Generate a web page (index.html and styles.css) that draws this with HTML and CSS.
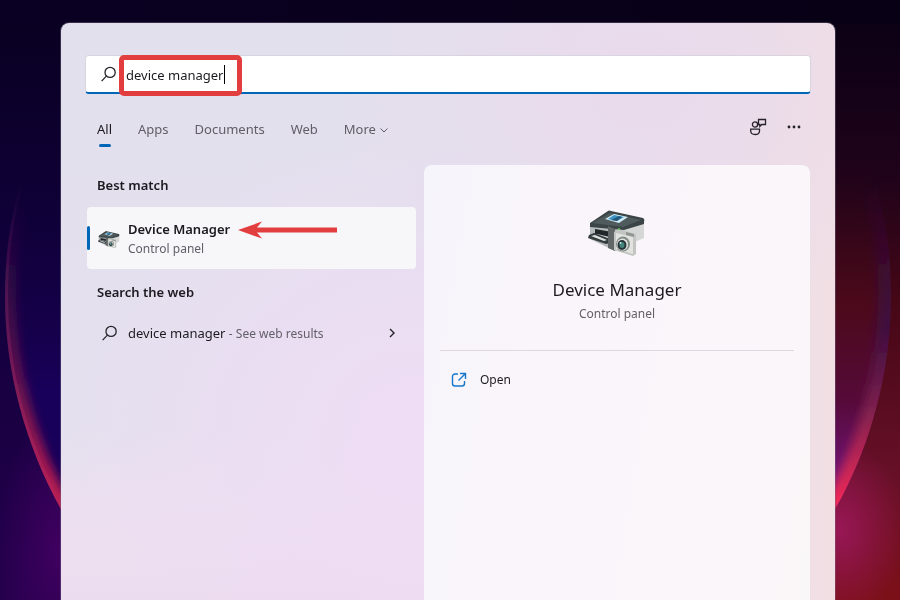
FILE: index.html
```html
<!DOCTYPE html>
<html lang="en">
<head>
<meta charset="utf-8">
<meta name="viewport" content="width=device-width, initial-scale=1">
<title>Search</title>
<link rel="stylesheet" href="styles.css">
</head>
<body>
<svg class="wallpaper" viewBox="0 0 900 600" preserveAspectRatio="none" aria-hidden="true">
  <defs>
    <linearGradient id="base" x1="0" y1="0" x2="0" y2="1"><stop offset="0" stop-color="#09001f"/><stop offset=".4" stop-color="#10003a"/><stop offset="1" stop-color="#24004c"/></linearGradient>
    <linearGradient id="warm" x1="0" y1="0" x2="0" y2="1"><stop offset="0" stop-color="#080014"/><stop offset=".3" stop-color="#20031a"/><stop offset=".5" stop-color="#450716"/><stop offset=".8" stop-color="#681028"/><stop offset="1" stop-color="#7c1018"/></linearGradient>
    <linearGradient id="top" x1="0" y1="0" x2="1" y2="0"><stop offset="0" stop-color="#0a0023"/><stop offset="1" stop-color="#080014"/></linearGradient>
    <linearGradient id="coolRim" gradientUnits="userSpaceOnUse" x1="0" y1="200" x2="0" y2="510"><stop offset="0" stop-color="#4b1048" stop-opacity="0"/><stop offset=".45" stop-color="#641348" stop-opacity=".7"/><stop offset="1" stop-color="#c81c50"/></linearGradient>
    <linearGradient id="coolEdge" gradientUnits="userSpaceOnUse" x1="0" y1="180" x2="0" y2="510"><stop offset="0" stop-color="#7e3070" stop-opacity="0"/><stop offset=".5" stop-color="#7e2060" stop-opacity=".5"/><stop offset="1" stop-color="#b82055"/></linearGradient>
    <linearGradient id="hotRim" gradientUnits="userSpaceOnUse" x1="0" y1="180" x2="0" y2="510"><stop offset="0" stop-color="#301048" stop-opacity="0"/><stop offset=".45" stop-color="#3c0e46" stop-opacity=".8"/><stop offset=".7" stop-color="#80204e"/><stop offset="1" stop-color="#f82a58"/></linearGradient>
    <linearGradient id="inLeft" x1="0" y1="0" x2="0" y2="1"><stop offset=".1" stop-color="#0c002b" stop-opacity="0"/><stop offset=".7" stop-color="#18005a"/></linearGradient>
    <linearGradient id="inRight" x1="0" y1="0" x2="0" y2="1"><stop offset=".15" stop-color="#200418" stop-opacity="0"/><stop offset=".5" stop-color="#4c0a1b"/><stop offset=".72" stop-color="#550a38"/><stop offset=".9" stop-color="#701478"/></linearGradient>
    <radialGradient id="glowL"><stop offset="0" stop-color="#400060"/><stop offset="1" stop-color="#400060" stop-opacity="0"/></radialGradient>
    <radialGradient id="glowR"><stop offset="0" stop-color="#981756"/><stop offset="1" stop-color="#981756" stop-opacity="0"/></radialGradient>
    <filter id="soft" x="-50%" y="-20%" width="200%" height="140%"><feGaussianBlur stdDeviation="5"/></filter>
    <clipPath id="discL"><path d="M62 90C20 160 5 225 5 297C5 370 25 445 62 511L70 520V90z"/></clipPath>
    <clipPath id="discR"><path d="M834 90C876 160 891 225 891 297C891 370 871 447 834 511L826 520V90z"/></clipPath>
  </defs>
  <rect width="450" height="600" fill="url(#base)"/>
  <rect x="450" width="450" height="600" fill="url(#warm)"/>
  <rect width="900" height="24" fill="url(#top)"/>
  <ellipse cx="60" cy="550" rx="65" ry="140" fill="url(#glowL)"/>
  <ellipse cx="840" cy="530" rx="65" ry="90" fill="url(#glowR)"/>
  <g clip-path="url(#discL)">
    <rect y="90" width="80" height="430" fill="url(#inLeft)"/>
    <path d="M62 90C20 160 5 225 5 297C5 370 25 445 62 511" fill="none" stroke="url(#coolRim)" stroke-width="22" filter="url(#soft)"/>
    <path d="M62 90C20 160 5 225 5 297C5 370 25 445 62 511" fill="none" stroke="url(#coolEdge)" stroke-width="6"/>
  </g>
  <g clip-path="url(#discR)">
    <rect x="820" y="90" width="80" height="430" fill="url(#inRight)"/>
    <path d="M834 90C876 160 891 225 891 297C891 370 871 447 834 511" fill="none" stroke="url(#hotRim)" stroke-width="26" filter="url(#soft)"/>
  </g>
</svg>

<main class="panel">
  <form class="search">
    <svg class="icon-search" viewBox="0 0 16 16" aria-hidden="true"><circle cx="9.5" cy="6" r="4.8"/><path d="M6 9.5L1.5 14.2"/></svg>
    <input type="text" aria-label="Search" value="device manager">
    <span class="caret"></span>
    <span class="highlight"></span>
  </form>

  <div class="toolbar">
    <nav class="tabs">
      <button class="tab active" type="button">All</button>
      <button class="tab" type="button">Apps</button>
      <button class="tab" type="button">Documents</button>
      <button class="tab" type="button">Web</button>
      <button class="tab" type="button">More <svg class="chevron-down" viewBox="0 0 8 8" aria-hidden="true"><path d="M.5 2.5L4 6l3.500-3.500"/></svg></button>
    </nav>
    <div class="actions">
      <button type="button" aria-label="Feedback"><svg class="icon-feedback" viewBox="0 0 18 18" aria-hidden="true"><circle cx="6" cy="6.500" r="2.600"/><path d="M1.700 11.200h8.800v1.800c0 2-1.600 3.500-4.400 3.500s-4.400-1.500-4.400-3.500zM9.500 1.500h7v5h-3.700l-2 2v-2H9.500z"/></svg></button>
      <button type="button" aria-label="Options"><svg class="icon-dots" viewBox="0 0 14 4" aria-hidden="true"><circle cx="2" cy="2" r="1.400"/><circle cx="7" cy="2" r="1.400"/><circle cx="12" cy="2" r="1.400"/></svg></button>
    </div>
  </div>

  <div class="content">
    <section class="results">
      <h2>Best match</h2>
      <a class="best" href="#device-manager">
        <svg class="device-small" viewBox="0 0 58 48" aria-hidden="true"><use href="#device"/></svg>
        <span class="labels"><strong>Device Manager</strong><small>Control panel</small></span>
        <svg class="arrow" viewBox="0 0 99 18" aria-hidden="true"><path d="M0 9L24 0.500L19 6.500H99V11.500H19L24 17.500z"/></svg>
      </a>
      <h2>Search the web</h2>
      <a class="web" href="#web">
        <svg class="icon-search" viewBox="0 0 16 16" aria-hidden="true"><circle cx="9.500" cy="6" r="4.800"/><path d="M6 9.500L1.500 14.200"/></svg>
        <span class="query">device manager <small>- See web results</small></span>
        <svg class="chevron-right" viewBox="0 0 8 10" aria-hidden="true"><path d="M2 1l4 4-4 4"/></svg>
      </a>
    </section>

    <section class="detail" id="device-manager">
      <svg class="device-large" viewBox="0 0 58 48" aria-hidden="true">
        <g id="device">
          <path d="M2 16L35 18V36L27 41L2 29z" fill="#b5b9b9"/>
          <path d="M35 18L56 12V28L35 37z" fill="#d5d7d6"/>
          <path d="M2 13L20 1Q21 0 23 1L55 8Q57 9 56 12V14L36 20L2 17z" fill="#3b4446"/>
          <path d="M4 13L22 3L53 10L35 17z" fill="#505b5d"/>
          <path d="M17 9L26 4L40 7L31 13z" fill="#d1ecf6"/>
          <path d="M20 9L26 5L36 7L29 11z" fill="#3d94c7"/>
          <path d="M23 10L31 6L34 7L29 11z" fill="#255778"/>
          <path d="M7 19L24 22V29L7 25z" fill="#202629"/>
          <path d="M9 24L22 27V31L6 27z" fill="#c7cccc"/>
          <path d="M1 25L6 23L22 29V33L18 34L0 28z" fill="#343b3d"/>
          <path d="M3 26L7 25L19 30L16 31z" fill="#dce0df"/>
          <path d="M20 16L27 19V41L20 38z" fill="#616767"/>
          <path d="M26 22L30 19L48 24V44L45 46L26 40z" fill="#c2c5c2"/>
          <path d="M28 23L45 27V44L28 39z" fill="#e2e3df"/>
          <path d="M38 22L46 24V27L38 25z" fill="#8f9693"/>
          <ellipse cx="35" cy="34" rx="7" ry="7.500" fill="#858d8b"/>
          <ellipse cx="34.500" cy="34.500" rx="5.500" ry="6" fill="#e2e5e0"/>
          <ellipse cx="34" cy="35" rx="4.500" ry="5" fill="#293338"/>
          <ellipse cx="34" cy="35" rx="2.500" ry="3" fill="#43837c"/>
          <circle cx="32.500" cy="33" r="1" fill="#b8eee1"/>
          <circle cx="31" cy="19" r="1" fill="#54c755"/>
        </g>
      </svg>
      <h1>Device Manager</h1>
      <p>Control panel</p>
      <hr>
      <a class="open" href="#open">
        <svg class="icon-open" viewBox="0 0 16 16" aria-hidden="true"><path d="M7 2H4a2.500 2.500 0 0 0-2.500 2.500v7A2.500 2.500 0 0 0 4 14h7a2.500 2.500 0 0 0 2.500-2.500V9M9 1.500h5.500V7M14.500 1.500L7.500 8.500"/></svg>
        Open
      </a>
    </section>
  </div>
</main>
</body>
</html>
```

FILE: styles.css
```css
* { box-sizing: border-box; }
body {
  margin: 0;
  min-height: 100vh;
  display: flex;
  padding: 23px 65px 0 61px;
  overflow: hidden;
  background: #0c0028;
  color: #1c1a20;
  font: 13px/20px "Noto Sans", "Open Sans", sans-serif;
}
button { border: 0; padding: 0; background: none; color: inherit; font: inherit; }
a { color: inherit; text-decoration: none; }
svg { flex: none; fill: none; stroke: #252229; }
h1, h2, p { margin: 0; }
.wallpaper { position: fixed; inset: 0; width: 100%; height: 100%; z-index: -1; stroke: none; }
.panel {
  flex: 1;
  min-width: 0;
  display: flex;
  flex-direction: column;
  padding: 32px 24px 0;
  border-radius: 8px 8px 0 0;
  box-shadow: 0 0 0 1px #77708866;
  background:
    radial-gradient(ellipse 45% 50% at 46% 70%, #efdcf5, #efdcf500),
    radial-gradient(ellipse 40% 45% at 75% 10%, #e9daec, #e9daec00),
    linear-gradient(90deg, #e3e0ee00 60%, #f1dfe4 100%),
    linear-gradient(#e3e0ed 0%, #e4e0ee 70%, #eddff0 88%, #ecdcef 100%);
}
.search {
  position: relative;
  display: flex;
  align-items: center;
  gap: 9px;
  height: 39px;
  padding: 1px 0 0 14px;
  border: 1px solid #d8d5df;
  border-bottom: 2px solid #0067b8;
  border-radius: 4px;
  background: #fff;
}
.search input { flex: 1; min-width: 0; height: 22px; padding: 1px 0 0; border: 0; outline: 0; background: none; color: inherit; font: inherit; }
.icon-search { width: 17px; height: 17px; stroke-width: 1.2; }
.caret { position: absolute; left: 138px; top: 9px; width: 1px; height: 19px; background: #000; }
.highlight { position: absolute; left: 33px; top: -1px; width: 123px; height: 41px; border: 5px solid #e23e40; border-radius: 5px; }
.toolbar { display: flex; justify-content: space-between; padding: 25px 10px 0 12px; height: 71px; }
.tabs { display: flex; gap: 26px; align-items: flex-start; color: #605d67; }
.tab { position: relative; }
.active { color: #1c1a20; }
.active::after { content: ""; position: absolute; left: 2px; top: 25px; width: 12px; height: 3px; border-radius: 2px; background: #0067b8; }
.chevron-down { width: 8px; height: 8px; margin-left: 1px; stroke: #605d67; }
.actions { display: flex; gap: 20px; align-items: flex-start; }
.actions button { display: flex; align-items: center; height: 16px; }
.icon-feedback { width: 18px; height: 18px; stroke-width: 1.3; }
.icon-dots { width: 14px; height: 4px; fill: #252229; stroke: none; }
.content { flex: 1; display: grid; grid-template-columns: 339fr 386fr; margin-right: 1px; }
.results { padding: 10px 8px 0 2px; }
h2 { padding-left: 10px; font-size: 13px; line-height: 20px; font-weight: 600; }
small { color: #625f68; font-size: 12px; line-height: 18px; }
.best {
  position: relative;
  display: flex;
  align-items: center;
  gap: 8px;
  height: 62px;
  margin: 12px 0 13px;
  padding-left: 11px;
  border-radius: 4px;
  background: #f7f6f9;
}
.best::before { content: ""; position: absolute; left: 0; top: 19px; width: 3px; height: 24px; border-radius: 2px; background: #0067b8; }
.device-small { width: 22px; height: 22px; margin-top: 4px; stroke: none; }
.labels { display: flex; flex-direction: column; gap: 1px; }
.labels strong { font-weight: 600; }
.arrow { width: 99px; height: 18px; margin-bottom: 16px; fill: #e23e40; stroke: none; }
.web { display: flex; align-items: center; gap: 10px; height: 40px; margin-top: 11px; padding: 0 20px 0 14px; }
.query { flex: 1; }
.chevron-right { width: 8px; height: 10px; stroke-width: 1.4; }
.detail {
  display: flex;
  flex-direction: column;
  align-items: center;
  padding: 44px 16px 0;
  border-radius: 8px 8px 0 0;
  background: linear-gradient(100deg, #f6f5fb, #faf5fa 40%, #faf7f9);
}
.device-large { width: 58px; height: 50px; stroke: none; }
h1 { margin-top: 18px; font-size: 17px; line-height: 26px; font-weight: 400; }
.detail p { margin-top: 2px; color: #625f68; font-size: 12px; line-height: 18px; }
hr { align-self: stretch; width: 100%; margin: 27px 0 19px; border: 0; border-top: 1px solid #dcd8dd; }
.open { display: flex; align-items: center; align-self: stretch; gap: 13px; padding-left: 11px; font-size: 12px; }
.icon-open { width: 16px; height: 16px; stroke: #1677cb; stroke-width: 1.4; }
```
